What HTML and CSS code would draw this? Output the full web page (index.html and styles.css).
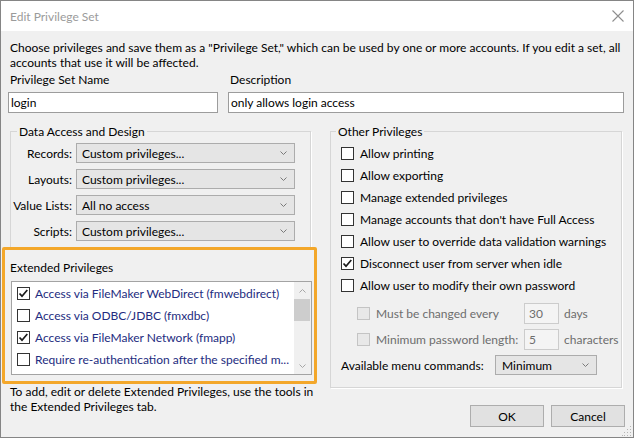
FILE: index.html
```html
<!DOCTYPE html>
<html>
<head>
<meta charset="utf-8">
<title>Edit Privilege Set</title>
<link rel="stylesheet" href="styles.css">
</head>
<body>
<div class="window">
  <div class="titlebar">
    <span class="title">Edit Privilege Set</span>
    <svg class="close" width="12" height="12" viewBox="0 0 12 12"><path d="M0.5 0.5L11.5 11.5M11.5 0.5L0.5 11.5" stroke="#8e8e8e" stroke-width="1.1"/></svg>
  </div>
  <div class="content">
    <p class="intro">Choose privileges and save them as a "Privilege Set," which can be used by one or more accounts. If you edit a set, all<br>accounts that use it will be affected.</p>
    <div class="name-row">
      <div class="field field-name">
        <div class="label">Privilege Set Name</div>
        <div class="textbox">login</div>
      </div>
      <div class="field field-desc">
        <div class="label">Description</div>
        <div class="textbox">only allows login access</div>
      </div>
    </div>
    <div class="columns">
      <div class="col-left">
        <fieldset class="group group-data">
          <legend>Data Access and Design</legend>
          <div class="form-grid">
            <div class="row-label">Records:</div>
            <div class="select"><span>Custom privileges...</span><svg class="chev" width="7" height="4" viewBox="0 0 7 4"><path d="M0.5 0.5L3.5 3.5L6.5 0.5" fill="none" stroke="#7a7a7a"/></svg></div>
            <div class="row-label">Layouts:</div>
            <div class="select"><span>Custom privileges...</span><svg class="chev" width="7" height="4" viewBox="0 0 7 4"><path d="M0.5 0.5L3.5 3.5L6.5 0.5" fill="none" stroke="#7a7a7a"/></svg></div>
            <div class="row-label">Value Lists:</div>
            <div class="select"><span>All no access</span><svg class="chev" width="7" height="4" viewBox="0 0 7 4"><path d="M0.5 0.5L3.5 3.5L6.5 0.5" fill="none" stroke="#7a7a7a"/></svg></div>
            <div class="row-label">Scripts:</div>
            <div class="select"><span>Custom privileges...</span><svg class="chev" width="7" height="4" viewBox="0 0 7 4"><path d="M0.5 0.5L3.5 3.5L6.5 0.5" fill="none" stroke="#7a7a7a"/></svg></div>
          </div>
        </fieldset>
        <div class="highlight">
          <div class="ext-label">Extended Privileges</div>
          <div class="listbox">
            <div class="list-items">
              <div class="list-item"><span class="cb"><svg width="11" height="11" viewBox="0 0 11 11"><path d="M1.5 5.5L4 8.2L9.3 2" fill="none" stroke="#1a1a1a" stroke-width="1.7"/></svg></span><span>Access via FileMaker WebDirect (fmwebdirect)</span></div>
              <div class="list-item"><span class="cb"></span><span>Access via ODBC/JDBC (fmxdbc)</span></div>
              <div class="list-item"><span class="cb"><svg width="11" height="11" viewBox="0 0 11 11"><path d="M1.5 5.5L4 8.2L9.3 2" fill="none" stroke="#1a1a1a" stroke-width="1.7"/></svg></span><span>Access via FileMaker Network (fmapp)</span></div>
              <div class="list-item"><span class="cb"></span><span>Require re-authentication after the specified m...</span></div>
            </div>
            <div class="scrollbar">
              <div class="sb-btn"><svg width="7" height="4" viewBox="0 0 7 4"><path d="M0.5 3.5L3.5 0.5L6.5 3.5" fill="none" stroke="#a6a6a6"/></svg></div>
              <div class="sb-thumb"></div>
              <div class="sb-track"></div>
              <div class="sb-btn"><svg width="7" height="4" viewBox="0 0 7 4"><path d="M0.5 0.5L3.5 3.5L6.5 0.5" fill="none" stroke="#a6a6a6"/></svg></div>
            </div>
          </div>
        </div>
        <p class="hint">To add, edit or delete Extended Privileges, use the tools in<br>the Extended Privileges tab.</p>
      </div>
      <div class="col-right">
        <fieldset class="group group-other">
          <legend>Other Privileges</legend>
          <div class="other-body">
            <div class="cb-row"><span class="cb"></span><span>Allow printing</span></div>
            <div class="cb-row"><span class="cb"></span><span>Allow exporting</span></div>
            <div class="cb-row"><span class="cb"></span><span>Manage extended privileges</span></div>
            <div class="cb-row"><span class="cb"></span><span>Manage accounts that don't have Full Access</span></div>
            <div class="cb-row"><span class="cb"></span><span>Allow user to override data validation warnings</span></div>
            <div class="cb-row"><span class="cb"><svg width="11" height="11" viewBox="0 0 11 11"><path d="M1.5 5.5L4 8.2L9.3 2" fill="none" stroke="#1a1a1a" stroke-width="1.7"/></svg></span><span>Disconnect user from server when idle</span></div>
            <div class="cb-row"><span class="cb"></span><span>Allow user to modify their own password</span></div>
            <div class="sub-block">
              <div class="sub-row"><span class="cb cb-disabled"></span><span class="sub-label">Must be changed every</span><span class="small-input">30</span><span class="unit">days</span></div>
              <div class="sub-row"><span class="cb cb-disabled"></span><span class="sub-label">Minimum password length:</span><span class="small-input">5</span><span class="unit">characters</span></div>
            </div>
            <div class="menu-row">
              <span class="menu-label">Available menu commands:</span>
              <div class="select select-menu"><span>Minimum</span><svg class="chev" width="7" height="4" viewBox="0 0 7 4"><path d="M0.5 0.5L3.5 3.5L6.5 0.5" fill="none" stroke="#7a7a7a"/></svg></div>
            </div>
          </div>
        </fieldset>
        <div class="buttons">
          <div class="button">OK</div>
          <div class="button">Cancel</div>
        </div>
      </div>
    </div>
  </div>
  <svg class="grip" width="10" height="10" viewBox="0 0 10 10">
    <rect x="8" y="0" width="1" height="1" fill="#b5b5b5"/>
    <rect x="5" y="3" width="1" height="1" fill="#b5b5b5"/><rect x="8" y="3" width="1" height="1" fill="#b5b5b5"/>
    <rect x="2" y="6" width="1" height="1" fill="#b5b5b5"/><rect x="5" y="6" width="1" height="1" fill="#b5b5b5"/><rect x="8" y="6" width="1" height="1" fill="#b5b5b5"/>
    <rect x="0" y="9" width="1" height="1" fill="#b5b5b5"/><rect x="2" y="9" width="1" height="1" fill="#b5b5b5"/><rect x="5" y="9" width="1" height="1" fill="#b5b5b5"/><rect x="8" y="9" width="1" height="1" fill="#b5b5b5"/>
  </svg>
</div>
</body>
</html>
```

FILE: styles.css
```css
html, body {
  margin: 0;
  padding: 0;
}

body {
  width: 634px;
  height: 438px;
  overflow: hidden;
  background: #ffffff;
  font-family: Lato, "Segoe UI", "Noto Sans", sans-serif;
  font-size: 12px;
  color: #000000;
}

.window {
  position: relative;
  box-sizing: border-box;
  width: 634px;
  height: 438px;
  border: 1px solid #858585;
  background: #f0f0f0;
  display: flex;
  flex-direction: column;
}

.titlebar {
  height: 30px;
  flex: none;
  background: #ffffff;
  display: flex;
  align-items: center;
  justify-content: space-between;
  padding: 0 9px;
}

.title {
  color: #9b9b9b;
  line-height: 15px;
}

.close {
  display: block;
}

.content {
  padding: 9px 9px 0 7px;
}

.intro {
  margin: 0 0 0 2px;
  line-height: 15px;
  white-space: nowrap;
}

.name-row {
  display: flex;
  gap: 10px;
  margin-top: 2px;
}

.field-name {
  width: 210px;
}

.field-desc {
  flex: 1;
}

.label {
  line-height: 15px;
  padding-left: 2px;
}

.textbox {
  box-sizing: border-box;
  height: 21px;
  margin-top: 5px;
  border: 1px solid #9c9c9c;
  background: #ffffff;
  padding: 0 2px;
  line-height: 19px;
}

.columns {
  display: flex;
  margin-top: 11px;
}

.col-left {
  width: 310px;
  flex: none;
}

.col-right {
  width: 294px;
  margin-left: 12px;
  flex: none;
}

.group {
  box-sizing: border-box;
  margin: 0;
  border: 1px solid #d6d6d6;
  box-shadow: 1px 1px 0 #ffffff;
  min-width: 0;
}

.group legend {
  padding: 0 2px;
  line-height: 15px;
}

.group-data {
  width: 301px;
  margin-left: 2px;
  padding: 4px 0 7px 0;
}

.group-data legend {
  margin-left: 6px;
}

.form-grid {
  display: grid;
  grid-template-columns: 61px 219px;
  column-gap: 4px;
  row-gap: 6px;
}

.row-label {
  display: flex;
  justify-content: flex-end;
  align-items: center;
  white-space: nowrap;
  height: 20px;
}

.select {
  box-sizing: border-box;
  height: 20px;
  border: 1px solid #acacac;
  background: #e5e5e5;
  display: flex;
  align-items: center;
  justify-content: space-between;
  padding: 0 7px 0 5px;
  white-space: nowrap;
}

.chev {
  display: block;
  flex: none;
}

.highlight {
  box-sizing: border-box;
  width: 315px;
  margin: -2px 0 0 -6px;
  border: 3px solid #f3a72a;
  border-radius: 2px;
  padding: 10px 0 6px 5px;
}

.ext-label {
  line-height: 15px;
}

.listbox {
  box-sizing: border-box;
  width: 301px;
  height: 94px;
  margin: 6px 0 0 1px;
  border: 1px solid #a3a3a3;
  background: #ffffff;
  display: flex;
}

.list-items {
  flex: 1;
  padding-left: 5px;
}

.list-item {
  height: 22px;
  display: flex;
  align-items: center;
  color: #232c80;
  white-space: nowrap;
}

.cb {
  box-sizing: border-box;
  width: 13px;
  height: 13px;
  flex: none;
  border: 1px solid #333333;
  background: #ffffff;
  margin-right: 5px;
  display: flex;
  align-items: center;
  justify-content: center;
}

.cb svg {
  display: block;
}

.cb-disabled {
  border-color: #c4c4c4;
  background: #e8e8e8;
}

.scrollbar {
  width: 17px;
  flex: none;
  background: #f0f0f0;
  display: flex;
  flex-direction: column;
}

.sb-btn {
  height: 17px;
  display: flex;
  align-items: center;
  justify-content: center;
}

.sb-thumb {
  height: 22px;
  margin: 0 1px 0 0;
  background: #cdcdcd;
}

.sb-track {
  flex: 1;
}

.hint {
  margin: 0 0 0 2px;
  line-height: 15px;
  white-space: nowrap;
}

.group-other {
  width: 292px;
  padding: 3px 0 9px 0;
}

.group-other legend {
  margin-left: 5px;
}

.other-body {
  padding-left: 10px;
}

.cb-row {
  height: 22px;
  display: flex;
  align-items: center;
  white-space: nowrap;
}

.cb-row .cb {
  margin-right: 6px;
}

.sub-block {
  margin-top: 4px;
  padding-left: 16px;
}

.sub-row {
  height: 26px;
  display: flex;
  align-items: center;
  white-space: nowrap;
  color: #6d6d6d;
}

.sub-row .cb {
  margin-right: 6px;
}

.sub-label {
  width: 148px;
  flex: none;
}

.small-input {
  box-sizing: border-box;
  width: 35px;
  height: 21px;
  flex: none;
  border: 1px solid #cccccc;
  background: #f4f4f4;
  padding: 0 4px;
  line-height: 19px;
}

.unit {
  margin-left: 5px;
}

.menu-row {
  height: 26px;
  display: flex;
  align-items: center;
  white-space: nowrap;
}

.menu-label {
  width: 154px;
  flex: none;
}

.select-menu {
  width: 102px;
  padding-left: 6px;
}

.buttons {
  display: flex;
  justify-content: flex-end;
  gap: 7px;
  margin: 17px -1px 0 0;
}

.button {
  box-sizing: border-box;
  width: 74px;
  height: 22px;
  border: 1px solid #adadad;
  background: #e1e1e1;
  display: flex;
  align-items: center;
  justify-content: center;
}

.grip {
  position: absolute;
  right: 1px;
  bottom: 1px;
  display: block;
}
```
